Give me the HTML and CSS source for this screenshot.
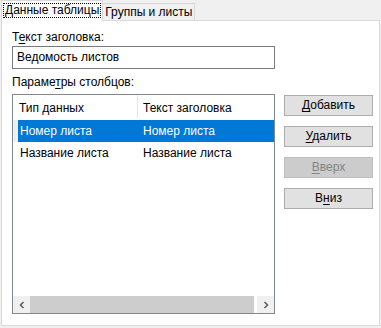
FILE: index.html
```html
<!DOCTYPE html>
<html lang="ru">
<head>
<meta charset="utf-8">
<link rel="stylesheet" href="styles.css">
</head>
<body>
<div class="window">
  <div class="tabs">
    <div class="tab active"><span class="focus">Данные таблицы</span></div>
    <div class="tab">Группы и листы</div>
  </div>
  <div class="panel">
    <div class="label">Т<u>е</u>кст заголовка:</div>
    <div class="input">Ведомость листов</div>
    <div class="label label2">Параме<u>т</u>ры столбцов:</div>
    <div class="main">
      <div class="list">
        <div class="list-body">
          <div class="header">
            <div class="hcell c1">Тип данных</div>
            <div class="hcell c2">Текст заголовка</div>
          </div>
          <div class="row selected">
            <div class="cell c1">Номер листа</div>
            <div class="cell c2">Номер листа</div>
          </div>
          <div class="row">
            <div class="cell c1">Название листа</div>
            <div class="cell c2">Название листа</div>
          </div>
        </div>
        <div class="hscroll">
          <div class="arrow"><svg width="8" height="8" viewBox="0 0 8 8"><polyline points="5.5,1 2.5,4 5.5,7" fill="none" stroke="#606060" stroke-width="1.6"/></svg></div>
          <div class="thumb"></div>
          <div class="arrow"><svg width="8" height="8" viewBox="0 0 8 8"><polyline points="2.5,1 5.5,4 2.5,7" fill="none" stroke="#606060" stroke-width="1.6"/></svg></div>
        </div>
      </div>
      <div class="buttons">
        <div class="btn"><u>Д</u>обавить</div>
        <div class="btn"><u>У</u>далить</div>
        <div class="btn disabled"><u>В</u>верх</div>
        <div class="btn">В<u>н</u>из</div>
      </div>
    </div>
  </div>
</div>
</body>
</html>
```

FILE: styles.css
```css
html, body {
  margin: 0;
  padding: 0;
  background: #f0f0f0;
}
body {
  font-family: "Liberation Sans", Arial, sans-serif;
  font-size: 12px;
  color: #000;
  width: 381px;
  height: 328px;
  overflow: hidden;
}
u {
  text-decoration: underline;
  text-underline-offset: 2px;
}
.window {
  padding-left: 1px;
}
.tabs {
  display: flex;
  align-items: flex-end;
  height: 20px;
}
.tab {
  box-sizing: border-box;
  height: 17px;
  padding: 0 2px;
  border: 1px solid #d9d9d9;
  border-bottom: none;
  border-left: none;
  background: #f0f0f0;
  line-height: 16px;
  white-space: nowrap;
}
.tab.active {
  position: relative;
  z-index: 1;
  height: 21px;
  margin-bottom: -1px;
  padding: 2px 1px 0 1px;
  background: #fff;
  border-left: 1px solid #d9d9d9;
}
.focus {
  display: block;
  outline: 1px dotted #000;
  outline-offset: -1px;
  line-height: 15px;
  padding: 0 2px;
  height: 15px;
}
.panel {
  box-sizing: border-box;
  width: 379px;
  height: 306px;
  background: #fff;
  border: 1px solid #d9d9d9;
  padding: 9px 0 0 10px;
}
.label {
  line-height: 15px;
  height: 15px;
}
.label2 {
  margin-top: 6px;
}
.input {
  box-sizing: border-box;
  width: 263px;
  height: 23px;
  margin-top: 1px;
  border: 1px solid #7a7a7a;
  padding-left: 4px;
  line-height: 20px;
}
.main {
  display: flex;
  gap: 9px;
  margin-top: 4px;
}
.list {
  box-sizing: border-box;
  width: 263px;
  height: 220px;
  border: 1px solid #828790;
  display: flex;
  flex-direction: column;
}
.list-body {
  flex: 1;
}
.header {
  display: flex;
  height: 25px;
}
.hcell {
  box-sizing: border-box;
  line-height: 26px;
  padding-left: 6px;
  height: 23px;
}
.hcell.c1 {
  width: 125px;
  border-right: 1px solid #e5e5e5;
}
.row {
  display: flex;
  height: 22px;
  line-height: 22px;
  margin-left: 5px;
}
.row.selected {
  background: #0078d7;
  color: #fff;
  box-shadow: -5px 0 0 #f0f0f0;
}
.cell.c1 {
  width: 120px;
  padding-left: 2px;
  box-sizing: border-box;
}
.cell.c2 {
  padding-left: 5px;
}
.hcell.c2 {
  padding-left: 5px;
}
.hscroll {
  display: flex;
  height: 17px;
}
.arrow {
  width: 17px;
  height: 17px;
  background: #f0f0f0;
  display: flex;
  align-items: center;
  justify-content: center;
}
.thumb {
  flex: 1;
  background: #cdcdcd;
  margin-right: 3px;
}
.buttons {
  display: flex;
  flex-direction: column;
  gap: 10px;
  padding-top: 1px;
}
.btn {
  box-sizing: border-box;
  width: 89px;
  height: 21px;
  border: 1px solid #adadad;
  background: #e1e1e1;
  text-align: center;
  line-height: 18px;
}
.btn.disabled {
  background: #cccccc;
  border-color: #bfbfbf;
  color: #838383;
}
```
